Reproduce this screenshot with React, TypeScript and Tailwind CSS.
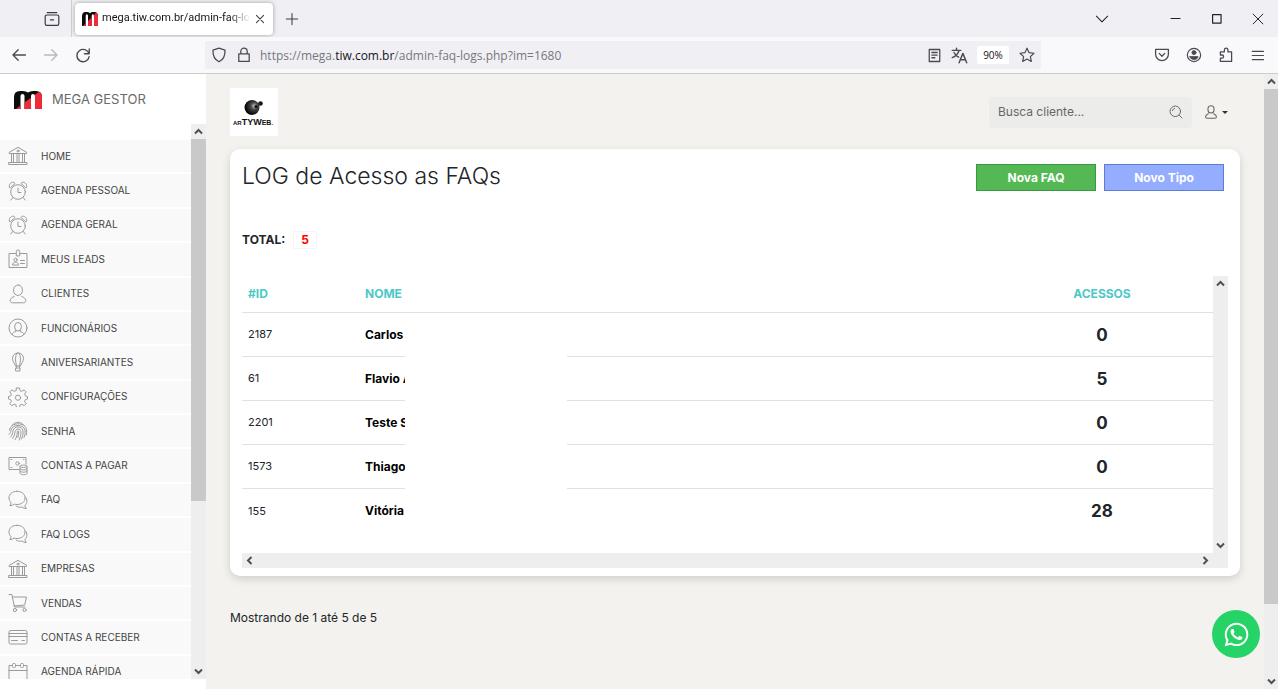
import type { ReactNode } from "react";
import { FaWhatsapp } from "react-icons/fa";
import { clsx } from "clsx";

const ICONS: Record<string, ReactNode> = {
  bank: (
    <>
      <path d="M1.5 6.2 10 1.3l8.5 4.9v1.3h-17zM1 18.5h18v-2H1z" />
      <circle cx="10" cy="5" r="1" />
      <path d="M3.5 8v8M5.5 8v8M9 8v8M11 8v8M14.5 8v8M16.5 8v8" />
    </>
  ),
  alarm: (
    <>
      <circle cx="10" cy="11" r="7.3" />
      <path d="M10 7v4.5h3M4.8 16.5l-2 2.5M15.2 16.5l2 2.5M1.6 6.6C.3 4 2.6.8 5.8 1.2L7 2.4 2.8 6.3zM18.4 6.6c1.3-2.6-1-5.8-4.2-5.4L13 2.4l4.2 3.9z" />
    </>
  ),
  badge: (
    <>
      <path d="M8 4.5H1v14h18v-14h-7" />
      <path d="M8.3 6.5V2.6a1.7 1.7 0 0 1 3.4 0v3.9z" />
      <circle cx="7.5" cy="10.8" r="1.6" />
      <path d="M4.5 15.7c0-3.6 6-3.6 6 0zM12.5 11.5h4M12.5 14.5h4" />
    </>
  ),
  user: (
    <>
      <rect x="5.7" y="1" width="8.6" height="10.4" rx="4.3" />
      <path d="M6.2 12.4c-2.3.9-4 2.3-4 4.4 0 1.3 1 2 2.3 2h11c1.3 0 2.3-.7 2.3-2 0-2.1-1.7-3.5-4-4.4" />
    </>
  ),
  userCircle: (
    <>
      <circle cx="10" cy="10" r="9" />
      <rect x="6.8" y="4.5" width="6.4" height="8.5" rx="3.2" />
      <path d="M4 16.5c.6-2 2-2.6 4-3v-1.3M16 16.5c-.6-2-2-2.6-4-3v-1.3" />
    </>
  ),
  balloon: (
    <>
      <path d="M10 1c3.4 0 5.5 2.4 5.5 5.3 0 3.2-2 5-3.200 7.700H7.700C6.500 11.300 4.500 9.500 4.500 6.300 4.500 3.400 6.600 1 10 1z" />
      <path d="M9 1.200C6.800 4 7.300 10 8.700 14M11 1.200c2.200 2.800 1.700 8.800.3 12.800M8.300 14v2M11.700 14v2M8 16h4v3H8z" />
    </>
  ),
  gear: (
    <>
      <path d="M8.500 1h3l.5 2.600 1.800.8 2.300-1.500 2 2-1.500 2.300.8 1.800 2.100.5v2.500l-2.100.6-.8 1.800 1.500 2.300-2 2-2.300-1.500-1.800.8-.5 2.500h-3L8 18l-1.800-.8-2.300 1.500-2-2 1.500-2.300-.8-1.800-2.100-.6V9.500L2.600 9l.8-1.800-1.500-2.300 2-2 2.300 1.500L8 3.600z" />
      <circle cx="10" cy="10.700" r="2.600" />
    </>
  ),
  finger: (
    <>
      <path d="M4 4.300C7.400.2 12.600.2 16 4.300M1.500 9c1.200-8.300 15.800-8.300 17 0 .3 2 .2 3.500-.2 5M1 13.500c1.600-1.300 1.700-3 2-4.300C4 3 16 3 17 9.200c.3 2.800 0 5-1 7.300" />
      <path d="M2.500 16c2-2 2.200-4 2.500-6.300 1-5 9-5 10 0 .3 3.300-.2 5.800-1.500 8.300M4.500 17.500c2-2.300 2.300-4.500 2.600-7 .5-3.300 5.300-3.300 5.800 0 .2 3-.3 5.500-1.700 8.500M7 18.800c1.700-2.500 2.300-5 2.300-8.300 0-1 1.400-1 1.400 0 0 2-.2 4-.8 6" />
    </>
  ),
  money: (
    <>
      <path d="M11 13.500H1V1.500h17V8M3 3.500h1M3 11.500h1M15.500 3.500h.5" />
      <circle cx="9.500" cy="7.500" r="1.700" />
      <path d="M12 10.300c0-1.700 7-1.700 7 0v7c0 2-7 2-7 0zM12 10.300c0 1.700 7 1.700 7 0M12 12.700c0 1.700 7 1.700 7 0M12 15c0 1.700 7 1.700 7 0" fill="#f9f9f9" />
    </>
  ),
  chat: (
    <>
      <path d="M9 1.300c4.800 0 8 2.800 8 6.600s-3.200 6.600-8 6.600c-1 0-2-.2-2.800-.4-1.200 1-2.700 1.500-4.400 1.500.8-.9 1.200-2 1.200-3.200C1.600 11.200 1 9.700 1 7.900c0-3.800 3.200-6.600 8-6.600z" />
      <path d="M17.500 7c2 2.700 2 6-.5 8.300 0 1.200.4 2.200 1.300 3.200-1.700 0-3.100-.5-4.200-1.500-2.300.6-4.500.2-6-1" />
    </>
  ),
  cart: (
    <>
      <path d="M1 1.500h2.800L6.500 14H17M4.500 4h14l-1.800 8-10.500 1" />
      <circle cx="7" cy="17" r="1.600" />
      <circle cx="16.500" cy="17" r="1.600" />
    </>
  ),
  card: (
    <>
      <rect x="1" y="3.500" width="18" height="13.500" rx="1.500" />
      <path d="M1 6.500h18M1 9.500h18M3.500 13.500h6M14 13.500h2.500" />
    </>
  ),
  calendar: (
    <>
      <path d="M4 3.500H1V19h18V3.500h-3M8 3.500h4M1 8.500h18" />
      <rect x="4.500" y="1.500" width="3" height="4" rx="1" />
      <rect x="12.500" y="1.500" width="3" height="4" rx="1" />
    </>
  ),
};

const MENU = [
  { label: "HOME", icon: "bank" },
  { label: "AGENDA PESSOAL", icon: "alarm" },
  { label: "AGENDA GERAL", icon: "alarm" },
  { label: "MEUS LEADS", icon: "badge" },
  { label: "CLIENTES", icon: "user" },
  { label: "FUNCIONÁRIOS", icon: "userCircle" },
  { label: "ANIVERSARIANTES", icon: "balloon" },
  { label: "CONFIGURAÇÕES", icon: "gear" },
  { label: "SENHA", icon: "finger" },
  { label: "CONTAS A PAGAR", icon: "money" },
  { label: "FAQ", icon: "chat" },
  { label: "FAQ LOGS", icon: "chat" },
  { label: "EMPRESAS", icon: "bank" },
  { label: "VENDAS", icon: "cart" },
  { label: "CONTAS A RECEBER", icon: "card" },
  { label: "AGENDA RÁPIDA", icon: "calendar" },
];

const LOGS = [
  { id: 2187, nome: "Carlos", acessos: 0 },
  { id: 61, nome: "Flavio A", acessos: 5 },
  { id: 2201, nome: "Teste S", acessos: 0 },
  { id: 1573, nome: "Thiago", acessos: 0 },
  { id: 155, nome: "Vitória", acessos: 28 },
];

function Icon({ size = 16, className, children }: { size?: number; className?: string; children: ReactNode }) {
  return (
    <svg
      width={size}
      height={size}
      viewBox="0 0 20 20"
      fill="none"
      stroke="currentColor"
      strokeLinecap="round"
      strokeLinejoin="round"
      className={clsx("shrink-0", className)}
      aria-hidden="true"
    >
      {children}
    </svg>
  );
}

function MegaLogo({ className }: { className?: string }) {
  return (
    <svg viewBox="0 0 28 18" preserveAspectRatio="none" className={clsx("shrink-0", className)} aria-hidden="true">
      <path d="M0 18V6Q0 0 6 0h3q3 0 5 1.500Q16 0 19 0h3q6 0 6 6v12h-7V5q0-2-2-2t-2 2v13h-6.500V5q0-2-2-2t-2 2v13z" fill="#0c0c0c" />
      <path d="M2 18l4.500-3.400V18zM10.500 18v-6.400L17 6.700V18zM21 18V3.700L25 .7Q28 2.200 28 6v12z" fill="#ee2b38" />
    </svg>
  );
}

function Arrow({ dir }: { dir: "up" | "down" | "left" | "right" }) {
  return (
    <span className="flex size-[15px] shrink-0 items-center justify-center bg-[#eeeeee] text-[#505050]">
      <svg
        width="9"
        height="9"
        viewBox="0 0 9 9"
        fill="none"
        stroke="currentColor"
        strokeWidth="2"
        className={clsx(dir === "down" && "rotate-180", dir === "left" && "-rotate-90", dir === "right" && "rotate-90")}
      >
        <path d="M1 6.500 4.500 3 8 6.500" />
      </svg>
    </span>
  );
}

function TabBar() {
  return (
    <div className="flex h-[37px] shrink-0 items-center bg-[#f0f0f4] text-[#3b3b44]">
      <button aria-label="Abas recentes" className="ml-11 mr-[11px]">
        <Icon size={16} className="block">
          <path d="M4 2h12M3.500 5h13a2 2 0 0 1 2 2v9a2 2 0 0 1-2 2h-13a2 2 0 0 1-2-2V7a2 2 0 0 1 2-2zM8 11h4" strokeWidth="1.500" />
        </Icon>
      </button>
      <div className="h-full w-px bg-[#cfcfd6]" />
      <div className="ml-[3px] flex h-8 w-[198px] items-center rounded bg-white pl-[7px] pr-2 shadow-[0_0_4px_rgba(0,0,0,0.35)]">
        <MegaLogo className="h-[14px] w-4" />
        <span className="ml-1 flex-1 whitespace-nowrap font-['Roboto',sans-serif] text-[11px] text-[#15141a] [mask-image:linear-gradient(to_right,black_86%,transparent)]">
          mega.tiw.com.br/admin-faq-lo
        </span>
        <button aria-label="Fechar aba" className="ml-1">
          <Icon size={12}>
            <path d="M4 4l12 12M16 4 4 16" strokeWidth="1.700" />
          </Icon>
        </button>
      </div>
      <button aria-label="Nova aba" className="ml-3">
        <Icon size={14}>
          <path d="M10 2v16M2 10h16" strokeWidth="1.500" />
        </Icon>
      </button>
      <div className="ml-auto flex items-center text-[#222]">
        <button aria-label="Listar abas" className="mr-[60px]">
          <Icon size={14}>
            <path d="m2 6 8 8 8-8" strokeWidth="1.500" />
          </Icon>
        </button>
        <button aria-label="Minimizar" className="mr-7">
          <Icon size={13}>
            <path d="M3 10h14" strokeWidth="1.600" />
          </Icon>
        </button>
        <button aria-label="Maximizar" className="mr-7">
          <Icon size={13}>
            <path d="M4 4h13v13H4z" strokeWidth="1.800" />
          </Icon>
        </button>
        <button aria-label="Fechar" className="mr-[13px]">
          <Icon size={14}>
            <path d="m3 3 14 14M17 3 3 17" strokeWidth="1.400" />
          </Icon>
        </button>
      </div>
    </div>
  );
}

function AddressBar() {
  return (
    <div className="flex h-[37px] shrink-0 items-center border-b border-[#cccccc] bg-[#f9f9fb] text-[#4a4a52]">
      <div className="flex w-[205px] shrink-0 items-center gap-4 pl-[11px]">
        <button aria-label="Voltar">
          <Icon>
            <path d="M18 10H2.500M9 3.500 2.500 10 9 16.500" strokeWidth="1.700" />
          </Icon>
        </button>
        <button aria-label="Avançar" className="text-[#b8b8be]">
          <Icon>
            <path d="M2 10h15.500M11 3.500l6.500 6.500-6.500 6.500" strokeWidth="1.700" />
          </Icon>
        </button>
        <button aria-label="Recarregar">
          <Icon>
            <path d="M17.500 8.500A7.700 7.700 0 1 0 17.700 12M17.800 2.500v6h-6" strokeWidth="1.700" />
          </Icon>
        </button>
      </div>
      <div className="flex h-7 flex-1 items-center bg-[#f0f0f4] px-[6px]">
        <Icon>
          <path d="M10 1.500 17.500 4c.3 6-1.500 11.500-7.500 14.500C4 15.500 2.200 10 2.500 4z" strokeWidth="1.600" />
        </Icon>
        <Icon className="ml-[9px]">
          <path d="M3.500 8.500h13v9.500h-13zM6 8.500V5.500a4 4 0 0 1 8 0v3" strokeWidth="1.600" />
        </Icon>
        <p className="ml-2 flex-1 whitespace-nowrap pt-[2px] text-xs text-[#77777f]">
          https://mega.<span className="text-[#15141a]">tiw.com.br</span>/admin-faq-logs.php?im=1680
        </p>
        <Icon size={15}>
          <path d="M3 2h14v16H3zM6.500 6h7M6.500 9.500h7M6.500 13h4" strokeWidth="1.700" />
        </Icon>
        <Icon size={17} className="ml-[9px]">
          <path d="M1.500 4h10M6.500 1.500V4M9.500 4C8.500 8 5.500 11 1.500 12.500M3.500 6.500c1.500 3 3.500 4.500 5.500 5.500M9.500 18.500l4.500-11 4.500 11M11 15h6" strokeWidth="1.700" />
        </Icon>
        <button className="ml-[9px] h-[18px] w-8 rounded-xs bg-white text-[10px] text-[#15141a]">90%</button>
        <button aria-label="Favoritar" className="ml-[10px]">
          <Icon>
            <path d="m10 1.500 2.600 5.600 6.100.7-4.500 4.200 1.200 6-5.400-3-5.400 3 1.200-6L1.300 7.800l6.100-.7z" strokeWidth="1.500" />
          </Icon>
        </button>
      </div>
      <div className="ml-[113px] mr-[13px] flex items-center gap-4">
        <button aria-label="Pocket">
          <Icon>
            <path d="M2 3h16v6a8 8 0 0 1-16 0zM6.500 8l3.500 3.500L13.500 8" strokeWidth="1.600" />
          </Icon>
        </button>
        <button aria-label="Conta">
          <Icon>
            <circle cx="10" cy="10" r="8.300" strokeWidth="1.500" />
            <circle cx="10" cy="7" r="2.600" fill="currentColor" />
            <path d="M5 12h10c0 5-10 5-10 0z" fill="currentColor" />
          </Icon>
        </button>
        <button aria-label="Extensões">
          <Icon>
            <path d="M3 6h5V3.700a2.200 2.200 0 0 1 4.400 0V6H17v12H3v-4h2a2 2 0 0 0 0-4H3z" strokeWidth="1.600" />
          </Icon>
        </button>
        <button aria-label="Menu">
          <Icon size={15}>
            <path d="M3 4.500h15M3 10h15M3 15.500h15" strokeWidth="1.500" />
          </Icon>
        </button>
      </div>
    </div>
  );
}

function Sidebar() {
  return (
    <aside className="flex w-[206px] shrink-0 flex-col bg-white pb-[10px]">
      <a href="#" className="flex h-[50px] shrink-0 items-center gap-[10px] pl-[14px] pt-[2px] text-[13px] text-[#6b6b6b]">
        <MegaLogo className="h-[18px] w-7" />
        MEGA GESTOR
      </a>
      <div className="flex min-h-0 flex-1">
        <nav className="flex-1 overflow-hidden pt-4">
          <ul className="flex h-[550px] flex-col">
            {MENU.map((item) => (
              <li key={item.label} className="flex-1 border-b-2 border-white bg-[#f9f9f9]">
                <a href="#" className="flex h-full items-center gap-[13px] pl-2 text-[10px] text-[#444]">
                  <Icon size={20} className="text-[#9a9a9a]">{ICONS[item.icon]}</Icon>
                  {item.label}
                </a>
              </li>
            ))}
          </ul>
        </nav>
        <div className="flex w-[15px] flex-col bg-[#eeeeee]">
          <Arrow dir="up" />
          <div className="flex-1">
            <div className="h-[69%] bg-[#c9c9c9]" />
          </div>
          <Arrow dir="down" />
        </div>
      </div>
    </aside>
  );
}

function Brand() {
  return (
    <svg viewBox="0 0 48 48" className="size-12 bg-white" role="img" aria-label="ArtyWeb">
      <defs>
        <radialGradient id="ball" cx="0.650" cy="0.400" r="0.600">
          <stop offset="0" stopColor="#c5c5c5" />
          <stop offset="0.400" stopColor="#444" />
          <stop offset="1" stopColor="#050505" />
        </radialGradient>
      </defs>
      <circle cx="22" cy="19.500" r="7.500" fill="url(#ball)" />
      <circle cx="26" cy="18.500" r="1.600" fill="#111" />
      <circle cx="30.500" cy="15.500" r="2.300" fill="#161616" />
      <text x="3" y="36.500" fontWeight="700" fontFamily="Liberation Sans, sans-serif" fill="#111">
        <tspan fontSize="6">AR</tspan>
        <tspan fontSize="9">TYW</tspan>
        <tspan fontSize="7">EB</tspan>
        <tspan fontSize="7" fill="#e33">.</tspan>
      </text>
    </svg>
  );
}

function LogTable() {
  return (
    <div className="flex">
      <div className="min-w-0 flex-1">
        <div className="h-[277px]">
          <table className="w-full table-fixed border-separate border-spacing-0 text-left text-[#212529]">
            <colgroup>
              <col className="w-[118px]" />
              <col className="w-[45px]" />
              <col className="w-[162px]" />
              <col />
              <col className="w-[222px]" />
            </colgroup>
            <thead>
              <tr className="h-[37px] text-xs text-[#4cc9c6]">
                <th className="border-b border-[#dee2e6] pl-[6px] font-bold">#ID</th>
                <th colSpan={3} className="border-b border-[#dee2e6] pl-[5px] font-bold">NOME</th>
                <th className="border-b border-[#dee2e6] text-center font-bold">ACESSOS</th>
              </tr>
            </thead>
            <tbody>
              {LOGS.map((log, i) => {
                const line = i < LOGS.length - 1 && "border-b border-[#dee2e6]";
                return (
                  <tr key={log.id} className="h-11 text-[11px]">
                    <td className={clsx("pl-[6px]", line)}>{log.id}</td>
                    <td className={clsx("overflow-hidden whitespace-nowrap pl-[5px] text-xs font-bold text-black", line)}>{log.nome}</td>
                    <td />
                    <td className={clsx(line)} />
                    <td className={clsx("pt-[2px] text-center text-[17px] font-bold", line)}>{log.acessos}</td>
                  </tr>
                );
              })}
            </tbody>
          </table>
        </div>
        <div className="flex justify-between bg-[#eeeeee]">
          <Arrow dir="left" />
          <Arrow dir="right" />
        </div>
      </div>
      <div className="flex w-[15px] flex-col justify-between bg-[#eeeeee] pb-[15px]">
        <Arrow dir="up" />
        <Arrow dir="down" />
      </div>
    </div>
  );
}

export default function App() {
  return (
    <div className="flex h-screen flex-col overflow-hidden font-['Open_Sans',sans-serif]">
      <TabBar />
      <AddressBar />
      <div className="flex min-h-0 flex-1 bg-[#f3f2ee] font-['Inter',sans-serif]">
        <Sidebar />
        <main className="relative min-w-0 flex-1 px-6 pt-[14px] text-[#212529]">
          <header className="flex items-center justify-between">
            <Brand />
            <div className="flex items-center text-[#666]">
              <form className="flex h-[31px] w-[203px] items-center rounded bg-[#ecedea] px-[9px]">
                <input
                  type="text"
                  aria-label="Busca cliente"
                  placeholder="Busca cliente..."
                  className="min-w-0 flex-1 bg-transparent text-xs outline-none placeholder:text-[#666]"
                />
                <button type="button" aria-label="Buscar">
                  <Icon size={14}>
                    <circle cx="9" cy="9" r="7.500" strokeWidth="1.400" />
                    <path d="m14.500 14.500 4 4M5 8c.5-1.700 1.500-2.700 3-3" strokeWidth="1.400" />
                  </Icon>
                </button>
              </form>
              <button aria-label="Minha conta" className="ml-3 mr-3 flex items-center gap-1">
                <Icon size={14}>
                  <g strokeWidth="1.500">{ICONS.user}</g>
                </Icon>
                <span className="border-x-[3px] border-t-[3px] border-x-transparent border-t-[#333]" />
              </button>
            </div>
          </header>

          <section className="mt-[13px] rounded-[10px] bg-white px-3 pb-2 pt-[15px] shadow-[0_3px_8px_rgba(0,0,0,0.15)]">
            <div className="flex items-start justify-between pr-1">
              <h1 className="text-[23px] leading-6 font-light">LOG de Acesso as FAQs</h1>
              <div className="flex gap-2 text-xs font-bold text-white">
                <button className="h-[27px] w-[120px] border border-[#3b9743] bg-[#54b954]">Nova FAQ</button>
                <button className="h-[27px] w-[120px] border border-[#5b7fd0] bg-[#95adff]">Novo Tipo</button>
              </div>
            </div>
            <p className="mt-[41px] flex h-4 items-center gap-2 text-xs font-bold">
              TOTAL: <span className="border border-[#f5f5f5] px-[7px] text-[#ff0000]">5</span>
            </p>
            <div className="mt-7">
              <LogTable />
            </div>
          </section>

          <p className="mt-[33px] text-xs leading-[18px]">Mostrando de 1 até 5 de 5</p>

          <a
            href="#"
            aria-label="WhatsApp"
            className="absolute bottom-[31px] right-1 flex size-12 items-center justify-center rounded-full bg-[#25d366] text-white"
          >
            <FaWhatsapp size={27} />
          </a>
        </main>
        <div className="flex w-[14px] shrink-0 flex-col bg-[#eeeeee]">
          <Arrow dir="up" />
          <div className="flex-1">
            <div className="h-[88%] bg-[#c9c9c9]" />
          </div>
          <Arrow dir="down" />
        </div>
      </div>
    </div>
  );
}
